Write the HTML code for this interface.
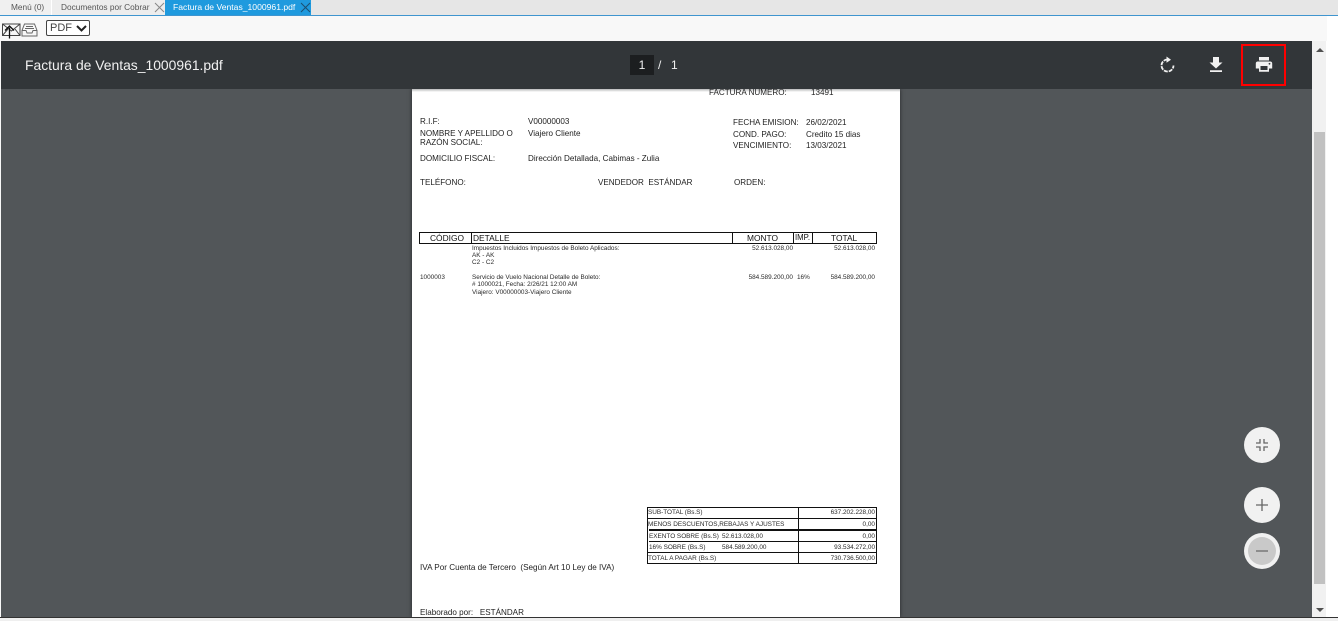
<!DOCTYPE html>
<html>
<head>
<meta charset="utf-8">
<style>
html,body{margin:0;padding:0;width:1338px;height:621px;overflow:hidden;background:#fff;font-family:"Liberation Sans",sans-serif}
#r{position:relative;width:1338px;height:621px;overflow:hidden}
.a,.t,.s,.h,.m{position:absolute;white-space:nowrap}
.t{font-size:8.1px;line-height:10px;color:#222}
.s{font-size:6.400px;line-height:8px;color:#2a2a2a}
.h{font-size:8.400px;line-height:10px;color:#111}
.m{font-size:6.400px;line-height:9px;color:#2a2a2a}
.b{position:absolute;background:#111}
.tab{position:absolute;top:0;height:15px;line-height:14px;font-size:8.3px;color:#555;white-space:nowrap}
</style>
</head>
<body>
<div id="r">
<div class="a" style="left:0;top:0;width:1338px;height:15px;background:#e6e6e6"></div>
<div class="a" style="left:0;top:15px;width:1338px;height:1px;background:#3f95cf"></div>
<div class="a" style="left:0;top:16px;width:1327px;height:25px;background:#f8f8f8"></div>
<div class="a" style="left:0;top:0;width:52px;height:15px;background:#f0f0f0"></div>
<div class="tab" style="left:11px">Menú (0)</div>
<div class="a" style="left:51px;top:0;width:1px;height:15px;background:#fff"></div>
<div class="a" style="left:52px;top:0;width:113px;height:15px;background:#ededed"></div>
<div class="tab" style="left:61px">Documentos por Cobrar</div>
<svg class="a" style="left:154px;top:2px" width="11" height="11" viewBox="0 0 11 11"><path d="M1 1L10 10M10 1L1 10" stroke="#888" stroke-width="1" fill="none"/></svg>
<div class="a" style="left:165px;top:0;width:146px;height:15px;background:#1f9ade"></div>
<div class="tab" style="left:173px;color:#fff;font-size:8.600px">Factura de Ventas_1000961.pdf</div>
<svg class="a" style="left:300px;top:2px" width="11" height="11" viewBox="0 0 11 11"><path d="M1 1L10 10M10 1L1 10" stroke="#1c4f70" stroke-width="1" fill="none"/></svg>

<svg class="a" style="left:2px;top:21px" width="36" height="18" viewBox="0 0 36 18" fill="none" stroke="#444" stroke-width="1"><path d="M.5 3H18V14.500H.5ZM.5 3L9.500 10L18 3M.5 14.500L6 8M18 14.500L13 8"/><path d="M7.500 17.500V6.500M3 9.500L7.500 5L12 9.500" stroke="#111" stroke-width="1.300"/><path d="M22.500 3H32.500L35 9.500V15H20V9.500ZM20 9.500H24L25 12H30L31 9.500H35M24 5.500H31M23 7.500H32" stroke="#666"/></svg>
<div class="a" style="left:46px;top:20px;width:42px;height:14px;border:1px solid #444;border-radius:2px;background:#fff;font-size:11px;line-height:14px;color:#444;text-indent:3px">PDF</div>
<svg class="a" style="left:76px;top:25px" width="11" height="7" viewBox="0 0 11 7"><path d="M1 1L5.500 5.500L10 1" stroke="#222" stroke-width="2" fill="none"/></svg>

<div class="a" style="left:0;top:41px;width:1312px;height:576px;background:#525659"></div>
<div class="a" style="left:0;top:41px;width:1px;height:576px;background:#f8f8f8"></div>

<div class="a" style="left:412px;top:89px;width:488px;height:528px;background:#fff;box-shadow:0 0 4px rgba(0,0,0,.55)"></div>

<div class="a" style="left:1px;top:41px;width:1311px;height:48px;background:#323639"></div>
<div class="a" style="left:25px;top:56px;font-size:13.900px;line-height:18px;color:#f1f1f1">Factura de Ventas_1000961.pdf</div>
<div class="a" style="left:630px;top:55px;width:24px;height:20px;background:#1c1e20;color:#f1f1f1;font-size:12px;line-height:20px;text-align:center">1</div>
<div class="a" style="left:658px;top:55px;font-size:12px;line-height:20px;color:#f1f1f1">/</div>
<div class="a" style="left:671px;top:55px;font-size:12px;line-height:20px;color:#f1f1f1">1</div>

<svg class="a" style="left:1159px;top:56px" width="18" height="18" viewBox="0 0 18 18" fill="none"><path d="M8.500 3.500A6 6 0 1 0 14.500 9.500" stroke="#f1f1f1" stroke-width="1.800" stroke-dasharray="4 1"/><path d="M7.500 .5L12 3.700L7.500 6.800Z" fill="#f1f1f1"/></svg>
<svg class="a" style="left:1208px;top:56px" width="16" height="17" viewBox="0 0 16 17"><path d="M5 1H11V6.500H14.500L8 12.500L1.500 6.500H5ZM2 14.300H14V16H2Z" fill="#f1f1f1"/></svg>
<svg class="a" style="left:1255px;top:56px" width="18" height="17" viewBox="0 0 18 17"><path d="M4 1H14V4.500H4ZM2.500 5.500H15.500A2 2 0 0 1 17.200 7.500V12.500H14V15.700H4V12.500H.8V7.500A2 2 0 0 1 2.500 5.500Z" fill="#f1f1f1"/><path d="M5.500 10H12.500V14H5.500Z" fill="#323639"/><circle cx="14.500" cy="7.800" r=".9" fill="#323639"/></svg>
<div class="a" style="left:1241px;top:44px;width:41px;height:38px;border:2px solid #f00"></div>

<!-- document text -->
<div class="t" style="left:709px;top:88px">FACTURA NUMERO:</div>
<div class="t" style="left:811px;top:88px">13491</div>
<div class="a" style="left:412px;top:89px;width:488px;height:3px;background:linear-gradient(rgba(50,54,57,.35),rgba(50,54,57,0))"></div>

<div class="t" style="left:420px;top:117px">R.I.F:</div>
<div class="t" style="left:528px;top:117px">V00000003</div>
<div class="t" style="left:420px;top:129px">NOMBRE Y APELLIDO O</div>
<div class="t" style="left:420px;top:138px">RAZÓN SOCIAL:</div>
<div class="t" style="left:528px;top:129px">Viajero Cliente</div>
<div class="t" style="left:420px;top:154px">DOMICILIO FISCAL:</div>
<div class="t" style="left:528px;top:154px">Dirección Detallada, Cabimas - Zulia</div>
<div class="t" style="left:420px;top:178px">TELÉFONO:</div>
<div class="t" style="left:598px;top:178px">VENDEDOR&nbsp; ESTÁNDAR</div>
<div class="t" style="left:734px;top:178px">ORDEN:</div>
<div class="t" style="left:733px;top:118px">FECHA EMISION:</div>
<div class="t" style="left:806px;top:118px">26/02/2021</div>
<div class="t" style="left:733px;top:130px">COND. PAGO:</div>
<div class="t" style="left:806px;top:130px">Credito 15 dias</div>
<div class="t" style="left:733px;top:141px">VENCIMIENTO:</div>
<div class="t" style="left:806px;top:141px">13/03/2021</div>

<!-- item table header -->
<div class="a" style="left:419px;top:232px;width:456px;height:10px;border:1px solid #111"></div>
<div class="b" style="left:471px;top:232px;width:1px;height:11px"></div>
<div class="b" style="left:732px;top:232px;width:1px;height:11px"></div>
<div class="b" style="left:793px;top:232px;width:1px;height:11px"></div>
<div class="b" style="left:812px;top:232px;width:1px;height:11px"></div>
<div class="h" style="left:430px;top:233px">CÓDIGO</div>
<div class="h" style="left:473px;top:233px">DETALLE</div>
<div class="h" style="left:747px;top:233px">MONTO</div>
<div class="h" style="left:795px;top:233px;font-size:7.800px">IMP.</div>
<div class="h" style="left:831px;top:233px">TOTAL</div>

<div class="s" style="left:472px;top:245px">Impuestos Incluidos Impuestos de Boleto Aplicados:</div>
<div class="s" style="left:472px;top:252px">AK - AK</div>
<div class="s" style="left:472px;top:259px">C2 - C2</div>
<div class="s" style="right:545px;top:245px">52.613.028,00</div>
<div class="s" style="right:463px;top:245px">52.613.028,00</div>
<div class="s" style="left:420px;top:274px">1000003</div>
<div class="s" style="left:472px;top:274px">Servicio de Vuelo Nacional Detalle de Boleto:</div>
<div class="s" style="left:472px;top:281px"># 1000021, Fecha: 2/26/21 12:00 AM</div>
<div class="s" style="left:472px;top:289px">Viajero: V00000003-Viajero Cliente</div>
<div class="s" style="right:545px;top:274px">584.589.200,00</div>
<div class="s" style="left:797px;top:274px">16%</div>
<div class="s" style="right:463px;top:274px">584.589.200,00</div>

<!-- totals -->
<div class="a" style="left:647px;top:507px;width:228px;height:55px;border:1px solid #111"></div>
<div class="b" style="left:798px;top:507px;width:1px;height:56px"></div>
<div class="b" style="left:647px;top:518px;width:230px;height:1px"></div>
<div class="b" style="left:649px;top:529px;width:228px;height:2px"></div>
<div class="b" style="left:649px;top:541px;width:228px;height:1px"></div>
<div class="b" style="left:647px;top:552px;width:230px;height:1px"></div>
<div class="m" style="left:648px;top:508px">SUB-TOTAL (Bs.S)</div>
<div class="m" style="left:648px;top:520px">MENOS DESCUENTOS,REBAJAS Y AJUSTES</div>
<div class="m" style="left:649px;top:532px">EXENTO SOBRE (Bs.S)</div>
<div class="m" style="left:722px;top:532px">52.613.028,00</div>
<div class="m" style="left:649px;top:543px">16% SOBRE (Bs.S)</div>
<div class="m" style="left:722px;top:543px">584.589.200,00</div>
<div class="m" style="left:648px;top:554px">TOTAL A PAGAR (Bs.S)</div>
<div class="m" style="right:463px;top:508px">637.202.228,00</div>
<div class="m" style="right:463px;top:520px">0,00</div>
<div class="m" style="right:463px;top:532px">0,00</div>
<div class="m" style="right:463px;top:543px">93.534.272,00</div>
<div class="m" style="right:463px;top:554px">730.736.500,00</div>

<div class="t" style="left:420px;top:563px;font-size:8.150px">IVA Por Cuenta de Tercero&nbsp; (Según Art 10 Ley de IVA)</div>
<div class="t" style="left:420px;top:608px">Elaborado por:&nbsp;&nbsp; ESTÁNDAR</div>

<!-- zoom buttons -->
<div class="a" style="left:1244px;top:427px;width:36px;height:36px;border-radius:50%;background:#f1f1f1"></div>
<svg class="a" style="left:1255px;top:438px" width="14" height="14" viewBox="0 0 14 14" fill="none" stroke="#666" stroke-width="1.300"><path d="M5 1V5H1M9 1V5H13M5 13V9H1M9 13V9H13"/></svg>
<div class="a" style="left:1244px;top:487px;width:36px;height:36px;border-radius:50%;background:#f1f1f1"></div>
<svg class="a" style="left:1255px;top:498px" width="14" height="14" viewBox="0 0 14 14" fill="none" stroke="#666" stroke-width="1.300"><path d="M7 1V13M1 7H13"/></svg>
<div class="a" style="left:1244px;top:533px;width:36px;height:36px;border-radius:50%;background:#f1f1f1"></div>
<div class="a" style="left:1248px;top:537px;width:28px;height:28px;border-radius:50%;background:#c9c9c9"></div>
<svg class="a" style="left:1255px;top:544px" width="14" height="14" viewBox="0 0 14 14" fill="none" stroke="#777" stroke-width="1.500"><path d="M1 7H13"/></svg>

<!-- scrollbar -->
<div class="a" style="left:1312px;top:41px;width:14px;height:576px;background:#f1f1f1"></div>
<div class="a" style="left:1314px;top:132px;width:11px;height:452px;background:#c1c1c1"></div>
<div class="a" style="left:1316px;top:48px;width:0;height:0;border-left:4px solid transparent;border-right:4px solid transparent;border-bottom:4px solid #505050"></div>
<div class="a" style="left:1316px;top:608px;width:0;height:0;border-left:4px solid transparent;border-right:4px solid transparent;border-top:4px solid #505050"></div>

<div class="a" style="left:0;top:617px;width:1338px;height:1px;background:#333"></div>
<div class="a" style="left:0;top:618px;width:1338px;height:3px;background:#efefef"></div>
</div>
</body>
</html>
